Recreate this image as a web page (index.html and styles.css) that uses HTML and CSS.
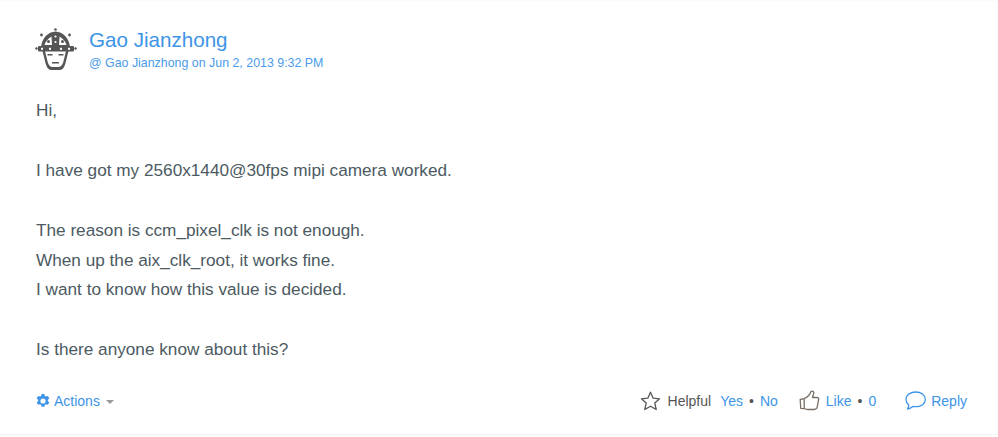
FILE: index.html
```html
<!DOCTYPE html>
<html lang="en">
<head>
<meta charset="utf-8">
<title>Post</title>
<link rel="stylesheet" href="styles.css">
</head>
<body>
<article class="post">
  <header class="post-head">
    <svg class="avatar" width="44" height="44" viewBox="34 28 44 44">
      <g fill="#555">
        <path d="M41 47C42 38 48 32 55.500 31.500C63 32 69 38 70 47Z"/>
        <rect x="38" y="46" width="36" height="5.500" rx="1"/>
        <path fill-rule="evenodd" d="M42.500 51h2.500l2.200 9c.8 4 2.500 7 5 7h6.600c2.500 0 4.200-3 5-7l2.200-9h2.500l-2.500 10c-1 5-3 9-6 9h-9c-3 0-5-4-6-9Z"/>
        <rect x="47.500" y="54" width="5" height="1.500"/>
        <rect x="58.500" y="54" width="5" height="1.500"/>
        <rect x="52" y="62" width="7" height="1.500"/>
        <circle cx="55.500" cy="29.500" r="1.300"/>
        <circle cx="41.500" cy="35" r="1.400"/>
        <circle cx="69.500" cy="35" r="1.400"/>
        <circle cx="36.500" cy="48.500" r="1.200"/>
        <circle cx="75.500" cy="48.500" r="1.200"/>
      </g>
      <g fill="#fff">
        <path d="M44.500 45C45.500 41.500 48 38.500 51.500 36.500L52 45Z"/>
        <path d="M66.500 45C65.500 41.500 63 38.500 59.500 36.500L59 45Z"/>
        <rect x="41" y="47.800" width="2" height="2"/>
        <rect x="49" y="47.800" width="2" height="2"/>
        <rect x="60" y="47.800" width="2" height="2"/>
        <rect x="68" y="47.800" width="2" height="2"/>
        <circle cx="55.500" cy="36.500" r="1.100"/>
        <circle cx="55.500" cy="42" r="1.100"/>
      </g>
      <g fill="#555">
        <circle cx="48.500" cy="41.500" r="1.500"/>
        <circle cx="62.500" cy="41.500" r="1.500"/>
      </g>
    </svg>
    <div class="byline">
      <a class="author">Gao Jianzhong</a>
      <div class="meta">@ Gao Jianzhong on Jun 2, 2013 9:32 PM</div>
    </div>
  </header>

  <div class="body">
    <p>Hi,</p>
    <p>I have got my 2560x1440@30fps mipi camera worked.</p>
    <p>The reason is ccm_pixel_clk is not enough.<br>When up the aix_clk_root, it works fine.<br>I want to know how this value is decided.</p>
    <p>Is there anyone know about this?</p>
  </div>

  <footer class="actions">
    <a class="action-menu">
      <svg class="gear" width="14" height="14" viewBox="0 0 14 14">
        <path fill="#3d94e6" fill-rule="evenodd" d="M5.600 0h2.800l.4 1.900 1.200.7 1.900-.6 1.400 2.400-1.500 1.300v1.400l1.500 1.300-1.400 2.400-1.900-.6-1.200.7-.4 1.900H5.600l-.4-1.900-1.200-.7-1.900.6L.7 8.400l1.500-1.300V5.700L.7 4.400 2.100 2l1.900.6 1.200-.7ZM7 4.400a2.600 2.600 0 1 0 0 5.200 2.600 2.600 0 0 0 0-5.200Z"/>
      </svg>
      <span>Actions</span>
      <i class="caret"></i>
    </a>
    <div class="tools">
      <div class="tool helpful">
        <svg width="21" height="20" viewBox="0 0 21 20">
          <path fill="none" stroke="#555" stroke-width="1.300" stroke-linejoin="round" d="M10.500 1.200l2.700 6 6.400.6-4.800 4.300 1.400 6.400-5.700-3.300-5.700 3.300 1.400-6.400L1.400 7.800l6.400-.6Z"/>
        </svg>
        <span class="label">Helpful</span>
        <span class="links"><a>Yes</a><b>•</b><a>No</a></span>
      </div>
      <div class="tool like">
        <svg width="21" height="21" viewBox="0 0 21 21">
          <path fill="none" stroke="#7a6f66" stroke-width="1.300" stroke-linejoin="round" d="M1.200 9.500l4-.8v10l-3.500-.4ZM5.200 8.700C8 7.500 10.800 5 12 1.500c1.500-1 3 0 2.700 2L13.500 7.500h4.600c1.600.2 1.900 1.500 1.400 2.700l-1.300 7c-.4 1.500-1.400 2.300-2.800 2.300H9c-1.600 0-2.600-.4-3.800-1"/>
        </svg>
        <span class="links"><a>Like</a><b>•</b><a>0</a></span>
      </div>
      <a class="tool reply">
        <svg width="21" height="20" viewBox="0 0 21 20">
          <path fill="none" stroke="#3d94e6" stroke-width="1.300" stroke-linejoin="round" d="M10.800 1C5.500 1 1 4 1 8.500c0 2.300 1 4 2.700 5.200.2 1.400-.3 2.800-1.200 4.300 2-.4 3.900-1.300 5.300-2.600 1 .2 2 .3 3 .3 5.200 0 9.500-3 9.500-7.300S16 1 10.800 1Z"/>
        </svg>
        <span>Reply</span>
      </a>
    </div>
  </footer>
</article>
</body>
</html>
```

FILE: styles.css
```css
* { box-sizing: border-box; }

html, body {
  margin: 0;
  background: #fff;
}

body {
  width: 998px;
  height: 437px;
  overflow: hidden;
  font-family: "Liberation Sans", Arial, sans-serif;
  color: #4c5a62;
}

a { color: #3d94e6; text-decoration: none; }

.post {
  height: 435px;
  padding: 27px 30px 0 36px;
  border: 1px solid #f5f5f5;
  border-top-color: #fafafa;
  margin: 0 0 2px;
  border-left: 0;
  border-right-color: #fafafa;
}

.post-head {
  display: flex;
  gap: 11px;
  align-items: flex-start;
}

.avatar {
  flex: none;
  margin-left: -2px;
}

.author {
  display: block;
  font-size: 20.6px;
  line-height: 23px;
}

.meta {
  margin-top: 5px;
  font-size: 12.4px;
  line-height: 14px;
  color: #4a9bea;
}

.body {
  margin-top: 24px;
  font-size: 17.2px;
  line-height: 29.9px;
}

.body p {
  margin: 0 0 29.9px;
}

.body p:last-child { margin-bottom: 0; }

.actions {
  display: flex;
  justify-content: space-between;
  align-items: center;
  margin-top: 25px;
  font-size: 14px;
  line-height: 20px;
}

.action-menu {
  display: flex;
  align-items: center;
  gap: 4px;
}

.caret {
  width: 0;
  height: 0;
  margin: 2px 0 0 2px;
  border: 4.500px solid transparent;
  border-top-color: #999;
  border-bottom: 0;
}

.tools {
  display: flex;
  align-items: center;
  gap: 21px;
}

.tool {
  display: flex;
  align-items: center;
  gap: 6px;
}

.helpful { gap: 7px; }

.label { color: #555; }

.links {
  display: flex;
  gap: 6px;
}

.helpful .links { margin-left: 2px; }

.reply {
  gap: 5px;
  margin-left: 8px;
}

.links b {
  font-weight: normal;
  color: #555;
}
```
